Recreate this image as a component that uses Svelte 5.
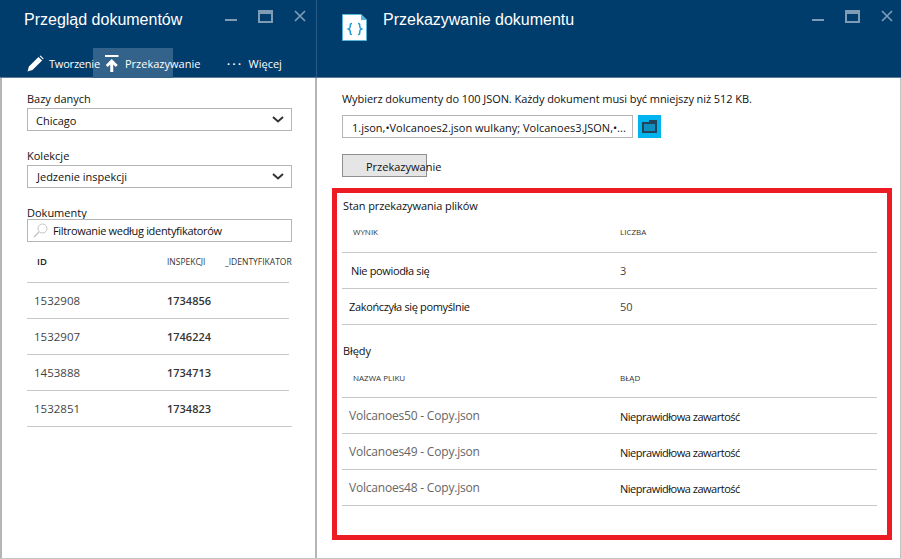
<script>
  const documents = [
    { id: "1532908", inspection: "1734856" },
    { id: "1532907", inspection: "1746224" },
    { id: "1453888", inspection: "1734713" },
    { id: "1532851", inspection: "1734823" },
  ];
  const results = [
    { label: "Nie powiodła się", count: "3", inset: "inset-a" },
    { label: "Zakończyła się pomyślnie", count: "50", inset: "inset-b" },
  ];
  const errors = ["Volcanoes50 - Copy.json", "Volcanoes49 - Copy.json", "Volcanoes48 - Copy.json"];
</script>

{#snippet controls()}
  <div class="controls">
    <svg width="12" height="12" viewBox="0 0 12 12"><rect x="0" y="9" width="12" height="2" fill="#7f9cb7" /></svg>
    <svg width="15" height="13" viewBox="0 0 15 13"><path d="M0 0h15v13H0z M2 4v7h11V4z" fill="#7f9cb7" fill-rule="evenodd" /></svg>
    <svg width="12" height="12" viewBox="0 0 12 12"><path d="M1 1l10 10M11 1L1 11" stroke="#7f9cb7" stroke-width="1.7" fill="none" /></svg>
  </div>
{/snippet}

{#snippet chevron()}
  <svg width="12" height="7" viewBox="0 0 12 7"><path d="M1 1l5 4.500L11 1" stroke="#333" stroke-width="2" fill="none" /></svg>
{/snippet}

<div class="frame">
  <section class="blade left">
    <header class="head">
      <div class="title-row">
        <h1>Przegląd dokumentów</h1>
        {@render controls()}
      </div>
      <nav class="commands">
        <div class="cmd create">
          <svg width="17" height="17" viewBox="0 0 17 17"><path d="M0.500 16.500l1.400-5L11.500 1.900l3.600 3.600L5.500 15.100z M12.500 1l1-.6 3.100 3.100-.6 1z" fill="#fff" /></svg>
          <span>Tworzenie</span>
        </div>
        <div class="cmd upload">
          <svg width="14" height="17" viewBox="0 0 14 17"><path d="M0 0h13.500v2H0z M6.750 4l6 6-2 2-2.500-2.500V17h-3V9.500L2.750 12l-2-2z" fill="#fff" /></svg>
          <span>Przekazywanie</span>
        </div>
        <div class="cmd more">
          <span class="dots">•••</span>
          <span>Więcej</span>
        </div>
      </nav>
    </header>

    <div class="left-body">
      <div class="field first">
        <span class="label">Bazy danych</span>
        <div class="select"><span>Chicago</span>{@render chevron()}</div>
      </div>
      <div class="field second">
        <span class="label">Kolekcje</span>
        <div class="select"><span>Jedzenie inspekcji</span>{@render chevron()}</div>
      </div>
      <div class="field third">
        <span class="label">Dokumenty</span>
        <div class="search">
          <svg width="15" height="15" viewBox="0 0 15 15"><circle cx="9.500" cy="5.500" r="4.500" stroke="#c4c4c4" fill="none" /><path d="M6 9l-5 5" stroke="#c4c4c4" stroke-width="1.500" /></svg>
          <span>Filtrowanie według identyfikatorów</span>
        </div>
      </div>

      <div class="doc-head">
        <span class="h-id">ID</span>
        <span class="h-insp">INSPEKCJI</span>
        <span class="h-key">_IDENTYFIKATOR</span>
      </div>
      {#each documents as doc, i}
        <div class="doc-row" class:last={i === documents.length - 1}>
          <span class="doc-id">{doc.id}</span>
          <span class="doc-insp">{doc.inspection}</span>
        </div>
      {/each}
    </div>
  </section>

  <section class="blade right">
    <header class="head">
      <div class="title-row right-title">
        <svg class="doc-icon" width="25" height="27" viewBox="0 0 25 27">
          <path d="M0.500 0.500H19L24.500 6V26.500H0.500z" fill="#fff" stroke="#59b4d9" />
          <path d="M19 0v6h6z" fill="#59b4d9" />
          <path d="M10 9.500c-2 0-1.700 1.200-1.700 2.500s-.5 2.500-1.800 3c1.300 .5 1.800 1.700 1.800 3s-.3 2.500 1.700 2.500M16 9.500c2 0 1.700 1.200 1.700 2.500s.5 2.500 1.800 3c-1.300 .5-1.800 1.700-1.800 3s.3 2.500-1.700 2.500" stroke="#1e9bd7" stroke-width="1.500" fill="none" />
        </svg>
        <h1>Przekazywanie dokumentu</h1>
        {@render controls()}
      </div>
    </header>

    <div class="right-body">
      <div class="intro">
        <p>Wybierz dokumenty do 100 JSON. Każdy dokument musi być mniejszy niż 512 KB.</p>
        <div class="picker">
          <div class="file-input">1.json,•Volcanoes2.json wulkany; Volcanoes3.JSON,•...</div>
          <div class="folder">
            <svg width="15" height="13" viewBox="0 0 15 13"><path d="M1 3h13v9H1z" fill="#0f8fbf" stroke="#23435a" stroke-width="2" /><path d="M7 0h8v3H7z" fill="#23435a" /></svg>
          </div>
        </div>
        <div class="upload-btn"><span>Przekazywanie</span></div>
      </div>

      <div class="status">
        <h2>Stan przekazywania plików</h2>
        <div class="grid-head first-head"><span>WYNIK</span><span>LICZBA</span></div>
        {#each results as row}
          <div class="grid-row">
            <span class="result {row.inset}">{row.label}</span>
            <span class="count">{row.count}</span>
          </div>
        {/each}

        <h2 class="errors-title">Błędy</h2>
        <div class="grid-head second-head"><span>NAZWA PLIKU</span><span>BŁĄD</span></div>
        {#each errors as file}
          <div class="grid-row">
            <span class="file">{file}</span>
            <span class="message">Nieprawidłowa zawartość</span>
          </div>
        {/each}
      </div>
    </div>
  </section>
</div>

<style>
  :global(body) {
    margin: 0;
    background: #fff;
  }

  .frame {
    width: 901px;
    height: 559px;
    box-sizing: border-box;
    display: grid;
    grid-template-columns: 317px 1fr;
    border-bottom: 1px solid #c4c4c4;
    font-family: "Open Sans", "Noto Sans", sans-serif;
    font-size: 11px;
    color: #111;
    overflow: hidden;
  }

  .blade {
    display: flex;
    flex-direction: column;
    min-width: 0;
  }

  .head {
    height: 78px;
    flex: none;
    box-sizing: border-box;
    background: #003c6c;
    border-bottom: 1px solid #5d7a96;
    color: #fff;
  }

  .right .head {
    margin-left: -1px;
    border-left: 1px solid #2a5a85;
  }

  .title-row {
    display: flex;
    height: 48px;
    padding-left: 24px;
  }

  h1 {
    margin: 9px 0 0;
    font-family: "Liberation Sans", sans-serif;
    font-size: 16px;
    font-weight: 400;
    line-height: 22px;
    flex: 1;
    white-space: nowrap;
  }

  .controls {
    display: flex;
    align-items: flex-start;
    gap: 21px;
    padding: 10px 11px 0 0;
  }

  .right .controls {
    padding-right: 8px;
  }

  .right-title {
    padding-left: 25px;
  }

  .right-title h1 {
    margin: 9px 0 0 16px;
  }

  .doc-icon {
    margin-top: 14px;
    flex: none;
  }

  .commands {
    display: flex;
    height: 30px;
    padding-left: 27px;
    font-size: 11px;
  }

  .cmd {
    display: flex;
    align-items: center;
    white-space: nowrap;
  }

  .cmd svg {
    flex: none;
  }

  .create {
    width: 66px;
    gap: 5px;
    position: relative;
    z-index: 1;
    letter-spacing: -0.2px;
  }

  .upload {
    width: 80px;
    gap: 6px;
    background: #33628a;
    padding-left: 12px;
    box-sizing: border-box;
  }

  .more {
    margin-left: 54px;
    gap: 5px;
  }

  .dots {
    font-size: 8px;
    letter-spacing: 2.500px;
  }

  .left-body {
    flex: 1;
    padding: 0 0 0 25px;
    border-left: 2px solid #b5b5b5;
    border-right: 2px solid #b5b5b5;
  }

  .field {
    display: flex;
    flex-direction: column;
    width: 265px;
  }

  .field.first {
    margin-top: 13px;
  }

  .field.first .select span {
    padding-top: 1px;
  }

  .field.second {
    margin-top: 17px;
  }

  .field.second .select {
    padding-left: 9px;
  }

  .field.third {
    margin-top: 17px;
  }

  .label {
    line-height: 16px;
    height: 17px;
  }

  .select {
    height: 23px;
    box-sizing: border-box;
    border: 1px solid #b5b5b5;
    display: flex;
    align-items: center;
    justify-content: space-between;
    padding: 0 7px 0 8px;
  }

  .search {
    height: 23px;
    box-sizing: border-box;
    border: 1px solid #b5b5b5;
    display: flex;
    align-items: center;
    gap: 5px;
    padding: 0 5px;
    margin-top: -3px;
    white-space: nowrap;
    letter-spacing: -0.32px;
  }

  .doc-head {
    display: flex;
    height: 41px;
    width: 262px;
    border-bottom: 1px solid #c8c8c8;
    box-sizing: border-box;
    padding-top: 13px;
    line-height: 14px;
    white-space: nowrap;
    font-size: 8.500px;
    color: #333;
  }

  .doc-head span {
    flex: none;
  }

  .h-id {
    margin-left: 10px;
    width: 130px;
    font-weight: 600;
    font-size: 9.500px;
    color: #222;
  }

  .h-insp {
    width: 58px;
  }

  .doc-row {
    display: flex;
    align-items: center;
    height: 36px;
    width: 262px;
    box-sizing: border-box;
    border-bottom: 1px solid #c8c8c8;
    padding-left: 7px;
    color: #444;
  }

  .doc-row.last {
    width: 265px;
  }

  .doc-id {
    width: 133px;
    font-size: 11.500px;
  }

  .doc-insp {
    color: #333;
    font-weight: 600;
  }

  .right-body {
    flex: 1;
    padding: 0 0 0 15px;
    border-right: 1px solid #c4c4c4;
  }

  .intro {
    padding-left: 10px;
    height: 110px;
  }

  p {
    margin: 0;
    padding-top: 13px;
    line-height: 16px;
    height: 24px;
    white-space: nowrap;
    letter-spacing: -0.07px;
  }

  .picker {
    display: flex;
    gap: 5px;
  }

  .file-input {
    width: 291px;
    height: 23px;
    box-sizing: border-box;
    border: 1px solid #b5b5b5;
    padding-left: 9px;
    line-height: 23px;
    white-space: nowrap;
    overflow: hidden;
  }

  .folder {
    width: 23px;
    height: 23px;
    background: #00b4f0;
    display: flex;
    align-items: center;
    justify-content: center;
  }

  .upload-btn {
    margin-top: 16px;
    width: 85px;
    height: 23px;
    box-sizing: border-box;
    background: #e5e5e5;
    border: 1px solid #8f8f8f;
    line-height: 23px;
    padding-left: 23px;
    white-space: nowrap;
  }

  .status {
    width: 560px;
    height: 352px;
    box-sizing: border-box;
    border: 5px solid #ed1c24;
    padding: 0 10px 0 5px;
  }

  h2 {
    margin: 0;
    padding: 5px 0 0 1px;
    font-size: 11px;
    font-weight: 400;
    line-height: 16px;
    letter-spacing: -0.1px;
  }

  .grid-head,
  .grid-row {
    display: grid;
    box-sizing: border-box;
    border-bottom: 1px solid #c8c8c8;
  }

  .grid-head {
    align-items: start;
    font-size: 8px;
    color: #333;
    padding-left: 11px;
    grid-template-columns: 267px 1fr;
    line-height: 12px;
  }

  .first-head {
    height: 39px;
    padding-top: 12px;
  }

  .second-head {
    height: 39px;
    padding-top: 13px;
  }

  .grid-row {
    grid-template-columns: 278px 1fr;
    height: 36px;
    align-items: center;
  }

  .result {
    letter-spacing: -0.35px;
  }

  .result.inset-a {
    padding-left: 9px;
  }

  .result.inset-b {
    padding-left: 7px;
  }

  .count {
    color: #444;
  }

  .errors-title {
    padding-top: 18px;
  }

  .file {
    padding-left: 7px;
    color: #666;
    font-size: 12px;
    letter-spacing: -0.2px;
  }

  .message {
    padding-top: 2px;
    letter-spacing: -0.48px;
  }
</style>
